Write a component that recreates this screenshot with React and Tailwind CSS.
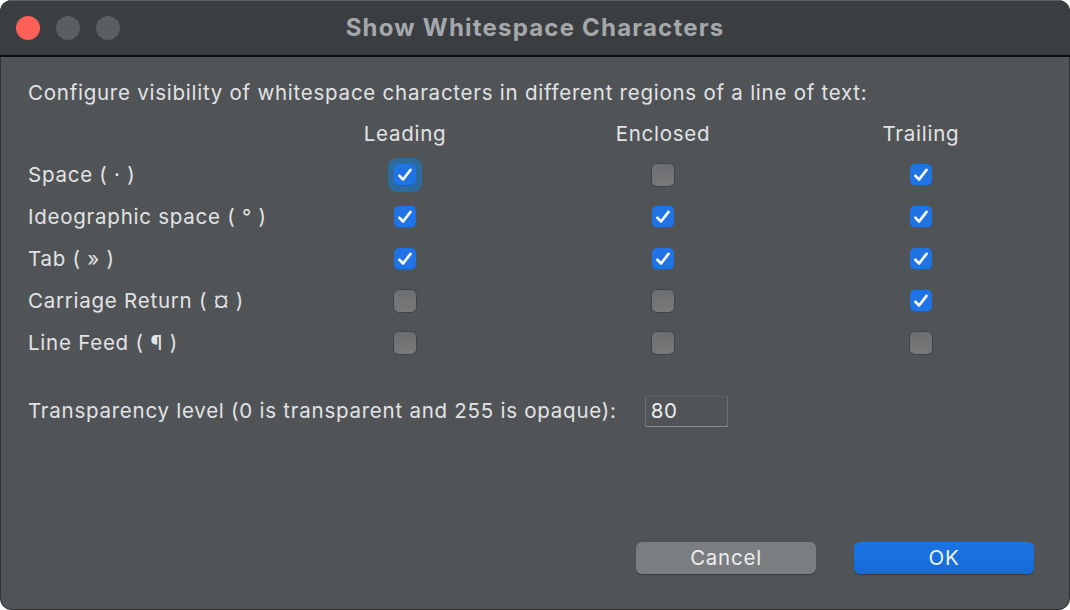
import React from "react";

function Check({ on, focus }) {
  const box = on ? (
    <div className="w-[22px] h-[22px] rounded-[5px] bg-[#1f73e5] flex items-center justify-center shadow-[inset_0_-1px_0_rgba(0,0,0,0.15)]">
      <svg width="18" height="18" viewBox="0 0 16 16" fill="none">
        <path d="M3 8.7 L6.3 12 L12.9 3.4" stroke="#f4f7fb" strokeWidth="2.4" strokeLinecap="round" strokeLinejoin="round" />
      </svg>
    </div>
  ) : (
    <div className="w-[22px] h-[22px] rounded-[5px] bg-gradient-to-b from-[#6c6f71] to-[#77797b] shadow-[0_0_0_0.5px_rgba(0,0,0,0.35)]"></div>
  );
  return (
    <div className="flex items-center justify-center w-[40px] h-[40px]">
      {focus ? (
        <div className="rounded-[9px] bg-[#2d6b9e] p-[6px]">{box}</div>
      ) : (
        box
      )}
    </div>
  );
}

const rows = [
  ["Space ( · )", [true, false, true]],
  ["Ideographic space ( ° )", [true, true, true]],
  ["Tab ( » )", [true, true, true]],
  ["Carriage Return ( ¤ )", [false, false, true]],
  ["Line Feed ( ¶ )", [false, false, false]],
];

export default function App() {
  return (
    <div
      className="w-[1070px] h-[610px] bg-white"
      style={{ fontFamily: "Inter, 'Noto Sans', sans-serif" }}
    >
      <div className="w-[1070px] h-[610px] rounded-[12px] overflow-hidden bg-[#505457] flex flex-col shadow-[inset_0_0_0_1px_rgba(0,0,0,0.4)]">
        <div className="h-[57px] bg-[#3b3e41] border-t border-[#5f6265] border-b-[2px] border-b-[#0c0d0e] flex items-center relative shrink-0">
          <div className="flex gap-[16px] pl-[16px]">
            <div className="w-[24px] h-[24px] rounded-full bg-[#fe5f57]"></div>
            <div className="w-[24px] h-[24px] rounded-full bg-[#5b5e61]"></div>
            <div className="w-[24px] h-[24px] rounded-full bg-[#5b5e61]"></div>
          </div>
          <div className="absolute inset-0 flex items-center justify-center text-[24px] tracking-[1.2px] font-bold text-[#a5a8ab]">
            Show Whitespace Characters
          </div>
        </div>
        <div className="flex-1 flex flex-col px-[28px] text-[#e2e3e4] text-[20.5px] tracking-[0.75px]">
          <div className="mt-[22px] leading-[28px]">
            Configure visibility of whitespace characters in different regions of a line of text:
          </div>
          <div className="flex flex-col mt-[7px]">
            <div className="flex h-[40px] items-center">
              <div className="w-[257px]"></div>
              <div className="w-[240px] text-center">Leading</div>
              <div className="w-[18px]"></div>
              <div className="w-[240px] text-center">Enclosed</div>
              <div className="w-[18px]"></div>
              <div className="w-[240px] text-center">Trailing</div>
            </div>
            {rows.map(([label, vals], i) => (
              <div key={i} className="flex h-[42px] items-center">
                <div className="w-[257px]">{label}</div>
                <div className="w-[240px] flex justify-center">
                  <Check on={vals[0]} focus={i === 0} />
                </div>
                <div className="w-[18px]"></div>
                <div className="w-[240px] flex justify-center">
                  <Check on={vals[1]} />
                </div>
                <div className="w-[18px]"></div>
                <div className="w-[240px] flex justify-center">
                  <Check on={vals[2]} />
                </div>
              </div>
            ))}
          </div>
          <div className="flex items-center mt-[32px]">
            <div>Transparency level (0 is transparent and 255 is opaque):</div>
            <div className="ml-[28px] w-[83px] h-[31px] border border-[#6e7173] border-b-[#8a8d8f] border-t-[#5c5f61] bg-[#505457] flex items-center pl-[5px] text-[#eeeeee]">
              80
            </div>
          </div>
          <div className="flex-1"></div>
          <div className="flex justify-end gap-[38px] pr-[8px] mb-[36px]">
            <div className="w-[180px] h-[32px] rounded-[6px] bg-[#7b7e80] flex items-center justify-center text-[#eceded] shadow-[0_1px_1px_rgba(0,0,0,0.3)]">
              Cancel
            </div>
            <div className="w-[180px] h-[32px] rounded-[6px] bg-gradient-to-b from-[#1b74e4] to-[#166bd6] flex items-center justify-center text-[#eef4fc] shadow-[0_1px_1px_rgba(0,0,0,0.3)]">
              OK
            </div>
          </div>
        </div>
      </div>
    </div>
  );
}
